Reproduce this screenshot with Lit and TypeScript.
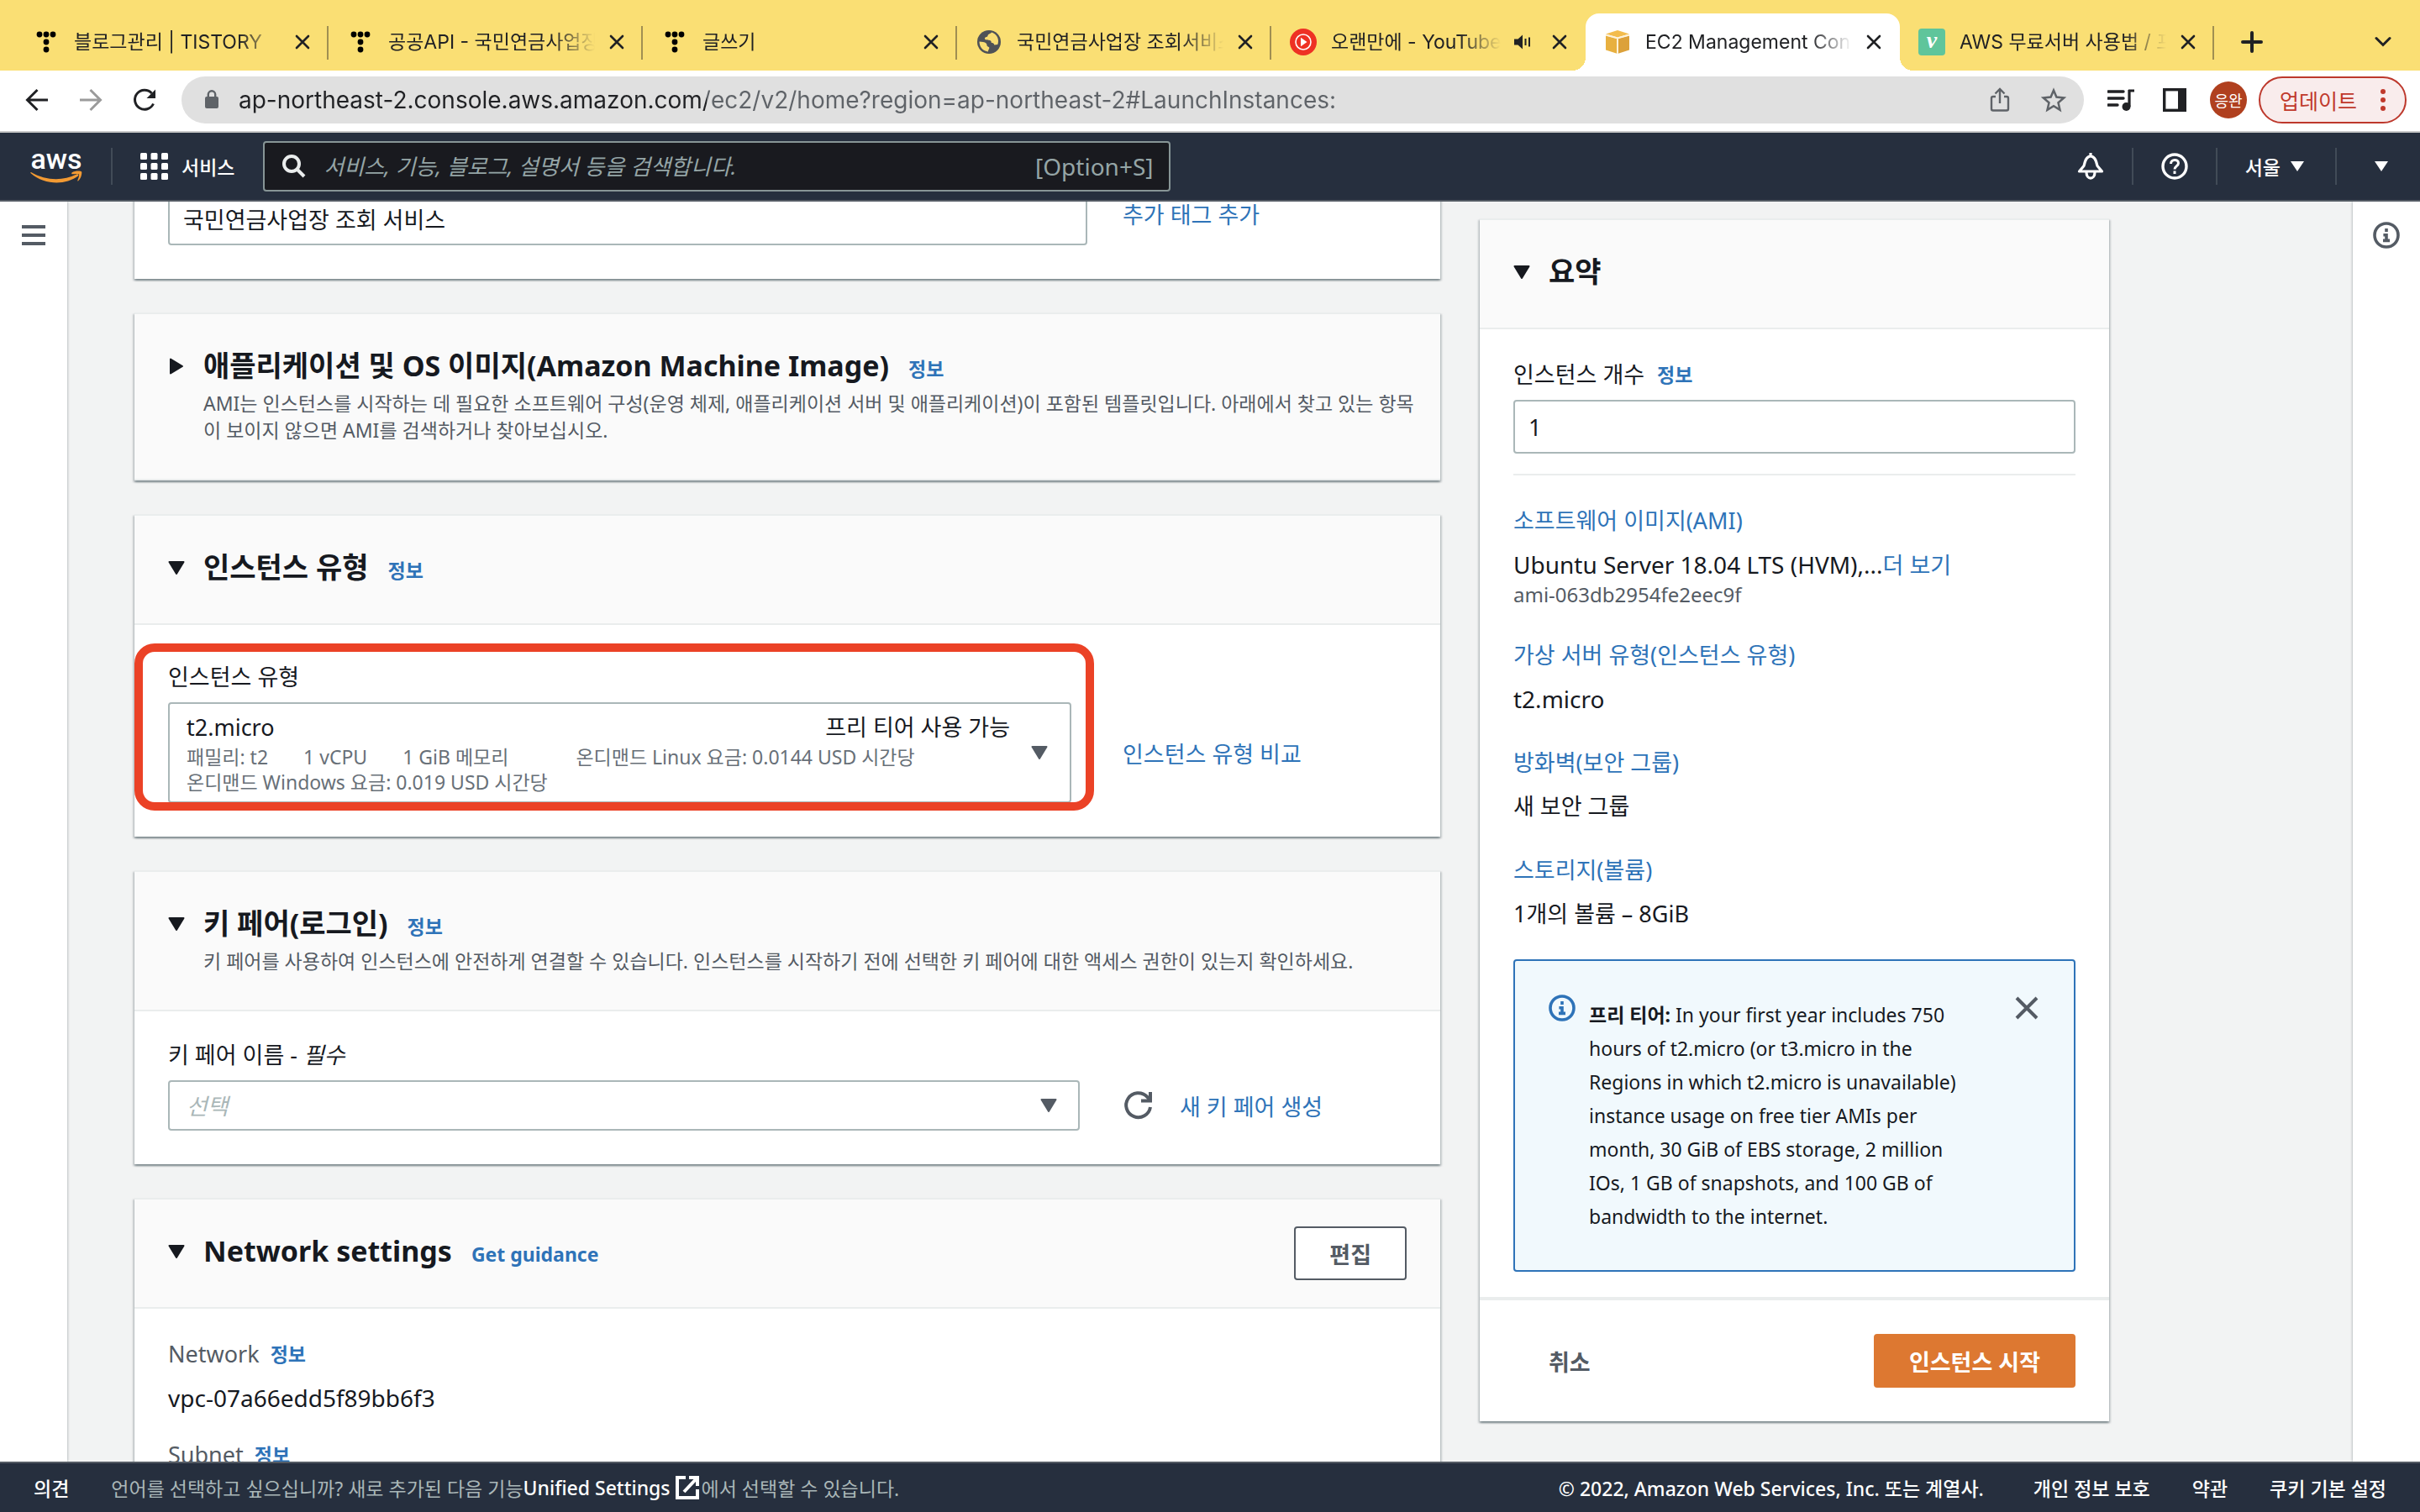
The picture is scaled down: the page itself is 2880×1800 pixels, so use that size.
import { LitElement, html, css, svg, nothing, TemplateResult } from "lit";
import { customElement, state } from "lit/decorators.js";
import { classMap } from "lit/directives/class-map.js";

interface Tab {
  title: string;
  icon: TemplateResult;
  active?: boolean;
  audible?: boolean;
  line?: boolean;
}

const tistoryIcon = html`<svg class="fav" viewBox="0 0 32 32" aria-hidden="true">
  ${[[8, 7], [16, 7], [24, 7], [16, 16], [16, 25]].map(
    ([x, y]) => svg`<circle cx=${x} cy=${y} r="3.4" fill="#000" />`
  )}
</svg>`;

const globeIcon = html`<svg class="fav" viewBox="0 0 32 32" aria-hidden="true">
  <circle cx="16" cy="16" r="14" fill="#4f5257" />
  <path d="M19 4.500c-1 2-4 1.500-4.500 4-.4 2.200-3 1-3.500 3-.4 1.800 2 2 4.500 2.200 2.500.2 3.500 1.300 3.300 3.300 1.700 0 3.200.5 3.500 2.500l4-.5c1.500-4 .7-8.500-2.300-11.500-1.300-1.400-3-2.500-5-3zM4.500 15.500c3 .3 6.500.5 8 2 1.500 1.400.5 2.500 1.500 3.500s2.500.6 2.300 2.300c-.2 1.400-1.300 1.700-1.300 4.200-6-.5-10.500-5.500-10.500-12z" fill="#f9dd74" />
</svg>`;

const musicIcon = html`<svg class="fav" viewBox="0 0 32 32" aria-hidden="true">
  <circle cx="16" cy="16" r="16" fill="#ee3124" />
  <circle cx="16" cy="16" r="9" fill="none" stroke="#fff" stroke-width="1.600" />
  <path d="M13 10.800v10.400l7.500-5.200z" fill="#fff" />
</svg>`;

const ec2Icon = html`<svg class="fav" viewBox="0 0 32 32" aria-hidden="true">
  <path d="M2 8.500 16 12v18L2 25.500z" fill="#e8b040" />
  <path d="M30 8.500 16 12v18l14-4.500z" fill="#dca13a" />
  <path d="M2 6.500 16 2l14 4.500L16 10.500z" fill="#f3bc4d" />
  <path d="M2 7.500 16 11.500 30 7.500M16 12v18" fill="none" stroke="#fdf1d8" stroke-width="2" />
</svg>`;

const velogIcon = html`<span class="fav velog" aria-hidden="true">v</span>`;

const tabs: Tab[] = [
  { title: "블로그관리 | TISTORY", icon: tistoryIcon, line: true },
  { title: "공공API - 국민연금사업장", icon: tistoryIcon, line: true },
  { title: "글쓰기", icon: tistoryIcon, line: true },
  { title: "국민연금사업장 조회서비스", icon: globeIcon, line: true },
  { title: "오랜만에 - YouTube", icon: musicIcon, audible: true },
  { title: "EC2 Management Con", icon: ec2Icon, active: true },
  { title: "AWS 무료서버 사용법 / 프리", icon: velogIcon, line: true },
];

const summaryRows = [
  { name: "소프트웨어 이미지(AMI)", value: "Ubuntu Server 18.04 LTS (HVM),...", more: "더 보기", note: "ami-063db2954fe2eec9f" },
  { name: "가상 서버 유형(인스턴스 유형)", value: "t2.micro" },
  { name: "방화벽(보안 그룹)", value: "새 보안 그룹", korean: true },
  { name: "스토리지(볼륨)", value: "1개의 볼륨 – 8GiB", korean: true },
];

const closeIcon = html`<svg width="20" height="20" viewBox="0 0 20 20" aria-hidden="true">
  <path d="M3 3l14 14M17 3 3 17" stroke="#202124" stroke-width="2.600" stroke-linecap="round" />
</svg>`;

const caretDown = html`<svg class="caret" viewBox="0 0 20 16" aria-hidden="true">
  <path d="M1.500 1h17L10 15z" fill="currentColor" stroke="currentColor" stroke-width="2" stroke-linejoin="round" />
</svg>`;

const caretRight = html`<svg class="caret" viewBox="0 0 20 20" aria-hidden="true">
  <path d="M3 1.500v17L17 10z" fill="currentColor" stroke="currentColor" stroke-width="2" stroke-linejoin="round" />
</svg>`;

const infoIcon = html`<svg width="32" height="32" viewBox="0 0 16 16" fill="none" stroke="currentColor" stroke-width="1.800" aria-hidden="true">
  <circle cx="8" cy="8" r="7" />
  <path d="M8 4v2M6.200 7.900H8v3.100M6 11.200h4" />
</svg>`;

@customElement("app-root")
export class AppRoot extends LitElement {
  @state() private alertOpen = true;

  static styles = css`
    :host {
      display: block;
      --aws: "Noto Sans", "Noto Sans CJK KR", sans-serif;
      --chrome: Inter, "Noto Sans CJK KR", sans-serif;
      --blue: #2e73b8;
      --ink: #16191f;
      --grey: #545b64;
      --rule: #eaeded;
      font-family: var(--aws);
      color: var(--ink);
    }
    *, *::before, *::after { box-sizing: border-box; }
    button, input, select { font: inherit; color: inherit; margin: 0; }
    button { background: none; border: 0; padding: 0; cursor: pointer; }
    a { color: var(--blue); text-decoration: none; }
    svg { display: block; flex: none; }
    h2, p, dl, dd { margin: 0; }

    .shell { display: flex; flex-direction: column; height: 100vh; overflow: hidden; background: #f2f3f3; }

    .tabstrip { display: flex; align-items: flex-end; height: 84px; flex: none; padding: 16px 34px 0 17px; background: #fadf74; font-family: var(--chrome); }
    .tab { position: relative; display: flex; align-items: center; flex: 0 1 374px; min-width: 0; height: 68px; padding: 0 21px 0 22px; font-size: 23px; color: #202124; }
    .tab.line::after { content: ""; position: absolute; right: 0; top: 15px; width: 2px; height: 40px; background: #a08f52; }
    .tab.active { background: #fff; border-radius: 16px 16px 0 0; }
    .tab.active::before, .tab.active::after { content: ""; position: absolute; bottom: 0; width: 16px; height: 16px; }
    .tab.active::before { left: -16px; background: radial-gradient(circle at 0 0, transparent 16px, #fff 16px); }
    .tab.active::after { right: -16px; background: radial-gradient(circle at 100% 0, transparent 16px, #fff 16px); }
    .fav { width: 32px; height: 32px; flex: none; margin-right: 17px; }
    .velog { display: flex; align-items: center; justify-content: center; border-radius: 4px; background: #5fc59b; color: #fff; font: italic bold 28px/28px "Liberation Serif", serif; padding-bottom: 4px; }
    .title { flex: 1; min-width: 0; overflow: hidden; white-space: nowrap; line-height: 34px; margin-right: 16px; -webkit-mask-image: linear-gradient(90deg, #000 calc(100% - 50px), transparent); mask-image: linear-gradient(90deg, #000 calc(100% - 50px), transparent); }
    .audio { margin-right: 24px; }
    .newtab { align-self: center; margin-left: 32px; }
    .tabmenu { align-self: center; margin-left: auto; }

    .toolbar { display: flex; align-items: center; flex: none; height: 74px; padding: 0 16px 2px 28px; background: #fff; border-bottom: 2px solid #c8c8c8; font-family: var(--chrome); }
    .navs { display: flex; gap: 32px; margin-right: 28px; }
    .omnibox { display: flex; align-items: center; flex: 1; height: 56px; padding: 0 20px 0 26px; border-radius: 28px; background: #e0e0e0; }
    .url { flex: 1; min-width: 0; height: 40px; margin: 0 24px 0 22px; border: 0; padding: 0; outline: 0; font-size: 28px; color: #5f6368; -webkit-text-fill-color: transparent; background: linear-gradient(90deg, #202124 557px, #5f6368 557px); -webkit-background-clip: text; background-clip: text; }
    .omniacts { display: flex; gap: 32px; }
    .tools { display: flex; align-items: center; gap: 32px; margin: 0 26px 0 28px; }
    .avatar { display: flex; align-items: center; justify-content: center; width: 44px; height: 44px; border-radius: 50%; background: #b0401f; color: #fff; font-size: 18px; margin-right: 14px; }
    .update { display: flex; align-items: center; justify-content: space-between; width: 176px; height: 56px; padding: 0 22px 0 23px; border: 2px solid #bd382c; border-radius: 28px; background: #f9ecec; color: #c0392b; font-size: 25px; }

    .awsnav { display: flex; align-items: center; flex: none; height: 82px; padding: 0 36px; background: #262f3e; border-bottom: 2px solid #545b64; color: #fff; font-size: 23px; font-weight: 500; }
    .logo { display: flex; flex-direction: column; align-items: center; width: 62px; color: #fff; font: 500 34px/24px Roboto, "Liberation Sans", sans-serif; }
    .logo span { display: block; height: 26px; }
    .bar { width: 2px; height: 44px; background: #414b57; }
    .logo + .bar { margin: 0 33px 0 34px; }
    .services { display: flex; align-items: center; gap: 16px; margin-right: 34px; }
    .search { display: flex; align-items: center; flex: 0 1 1080px; height: 60px; padding: 0 19px; border: 2px solid #879596; border-radius: 4px; background: #191a1f; }
    .search input { flex: 1; min-width: 0; height: 52px; margin-left: 19px; padding: 0; border: 0; outline: 0; background: none; font-size: 26px; font-weight: 400; }
    .search input::placeholder { color: #95a5a6; font-style: italic; opacity: 1; }
    .search kbd { font: 400 28px var(--aws); color: #95a5a6; }
    .acts { display: flex; align-items: center; margin-left: auto; }
    .acts button { display: flex; align-items: center; gap: 12px; margin: 0 33px; }
    .acts .region { margin-right: 37px; }
    .acts button:last-child { margin: 0 2px 0 45px; }
    .tri { width: 16px; height: 12px; }

    .page { display: flex; flex: 1; min-height: 0; overflow: hidden; }
    .rail { flex: none; width: 80px; background: #fff; box-shadow: 0 0 3px rgba(0, 28, 36, 0.4); color: var(--grey); display: flex; flex-direction: column; align-items: center; padding-top: 24px; }
    .content { flex: 1; min-width: 0; display: grid; grid-template-columns: minmax(0, 1554fr) minmax(0, 749fr); gap: 47px; align-items: start; padding: 0 290px 0 80px; }
    .column { display: flex; flex-direction: column; gap: 40px; margin-top: -40px; }
    .aside { margin-top: 20px; }

    .card { background: #fff; border-top: 2px solid var(--rule); box-shadow: 0 2px 2px rgba(0, 28, 36, 0.3), 2px 2px 2px rgba(0, 28, 36, 0.15), -2px 2px 2px rgba(0, 28, 36, 0.15); }
    .head { display: flex; justify-content: space-between; align-items: flex-start; min-height: 130px; padding: 40px; background: #fafafa; border-bottom: 2px solid var(--rule); }
    .heading { display: grid; grid-template-columns: 20px 1fr; column-gap: 22px; align-items: center; }
    .titleline { display: flex; align-items: baseline; gap: 23px; height: 44px; }
    h2 { font-size: 34px; font-weight: 700; line-height: 42px; }
    .caret { width: 20px; }
    .info { font-size: 23px; font-weight: 700; line-height: 32px; }
    .desc { grid-column: 2; margin-top: 6px; font-size: 23px; line-height: 32px; color: var(--grey); white-space: nowrap; padding-bottom: 2px; }
    .body { padding: 40px; font-size: 27px; }
    .body.tight { padding-top: 30px; }
    .row { display: grid; grid-template-columns: minmax(0, 1094fr) minmax(0, 338fr); column-gap: 42px; align-items: center; }
    .body.first { padding-top: 26px; align-items: start; line-height: 56px; }
    .label { display: flex; align-items: center; gap: 15px; line-height: 44px; margin-bottom: 8px; }
    .box { display: block; width: 100%; height: 64px; padding: 0 16px; border: 2px solid #aab7b8; border-radius: 4px; background: #fff; outline: 0; }
    .typefield { position: relative; margin-right: 19px; }
    .type { display: flex; align-items: center; justify-content: space-between; width: 100%; height: 120px; padding: 0 26px 0 20px; border: 2px solid #aab7b8; border-radius: 4px; text-align: left; color: var(--grey); }
    .typeinfo { width: 980px; }
    .typename { display: flex; justify-content: space-between; align-items: center; line-height: 40px; color: var(--ink); }
    .specs { display: flex; gap: 42px; font-size: 23px; line-height: 30px; color: #687078; white-space: nowrap; }
    .specs .wide { margin-left: 38px; }
    .mark { position: absolute; inset: -70px -27px -9px -40px; border: 10px solid #eb4226; border-radius: 24px; pointer-events: none; }
    .pick { position: relative; margin-right: 9px; color: var(--grey); }
    .pick select { width: 100%; height: 60px; padding: 0 20px; appearance: none; border: 2px solid #aab7b8; border-radius: 4px; background: #fff; color: #aab7b8; font-style: italic; outline: 0; }
    .pick .caret { position: absolute; right: 27px; top: 22px; pointer-events: none; }
    .create { display: flex; align-items: center; gap: 32px; color: var(--grey); }
    .btn { height: 64px; padding: 0 40px; border: 2px solid var(--grey); border-radius: 4px; background: #fff; color: var(--grey); font-size: 27px; font-weight: 700; }
    .head .btn { margin: -8px 0 -20px; }
    .facts { display: flex; flex-direction: column; padding: 32px 40px 40px; font-size: 28px; line-height: 44px; }
    .facts .name { display: flex; align-items: center; gap: 13px; font-size: 27px; color: var(--grey); }
    .facts dd { margin: 8px 0 24px; }

    .sumbody { padding: 32px 40px 30px; font-size: 27px; }
    .sumlist { display: flex; flex-direction: column; gap: 36px; margin: 24px 0 34px; padding-top: 34px; border-top: 2px solid var(--rule); line-height: 40px; }
    .sumlist dd { margin-top: 12px; font-size: 28px; white-space: nowrap; }
    .sumlist dd.korean, .sumlist .more { font-size: 27px; }
    .sumlist .value { display: block; height: 40px; }
    .note { display: block; font-size: 24px; line-height: 32px; color: var(--grey); }
    .alert { display: flex; gap: 16px; padding: 40px 40px 44px; border: 2px solid var(--blue); border-radius: 4px; background: #f1f9fd; color: var(--blue); }
    .alert p { flex: 1; margin: 4px 0 0; font-size: 23px; line-height: 40px; color: var(--ink); }
    .alert b { font-weight: 700; }
    .alert button { align-self: flex-start; margin-left: 24px; }
    .sumfoot { display: flex; align-items: center; justify-content: space-between; padding: 40px; border-top: 4px solid var(--rule); }
    .btn.plain { border-color: transparent; background: none; }
    .btn.primary { border-color: #dd7831; background: #dd7831; color: #fff; }

    .footer { display: flex; align-items: center; flex: none; height: 60px; padding: 0 40px; background: #262f3e; border-top: 2px solid #545b64; color: #fff; font-size: 23px; font-weight: 500; white-space: nowrap; }
    .footer a { color: #fff; }
    .footer .lang { display: flex; align-items: center; margin-left: 50px; color: #aab7b8; font-weight: 400; }
    .footer .lang a { display: flex; align-items: center; gap: 6px; margin-right: 3px; font-weight: 500; }
    .legal { display: flex; gap: 50px; margin-left: auto; }
    .legal span { margin-right: 9px; }
  `;

  private heading(title: string, info: string, open: boolean, desc?: TemplateResult) {
    return html`<div class="heading">
      ${open ? caretDown : caretRight}
      <div class="titleline">
        <h2>${title}</h2>
        ${info ? html`<a class="info" href="#">${info}</a>` : nothing}
      </div>
      ${desc ? html`<p class="desc">${desc}</p>` : nothing}
    </div>`;
  }

  private renderTabs() {
    return html`<div class="tabstrip">
      ${tabs.map(
        (t) => html`<div class=${classMap({ tab: true, active: !!t.active, line: !!t.line })}>
          ${t.icon}<span class="title">${t.title}</span>
          ${t.audible
            ? html`<svg class="audio" width="20" height="20" viewBox="0 0 20 20" aria-label="소리">
                <path d="M0 6.500h4.500L10 1.500v17L4.500 13.500H0z" fill="#202124" />
                <path d="M13.500 6v8M18 4.500v11" stroke="#202124" stroke-width="2" />
              </svg>`
            : nothing}
          <button aria-label="탭 닫기">${closeIcon}</button>
        </div>`
      )}
      <button class="newtab" aria-label="새 탭">
        <svg width="26" height="26" viewBox="0 0 26 26"><path d="M13 2v22M2 13h22" stroke="#202124" stroke-width="4" stroke-linecap="round" /></svg>
      </button>
      <button class="tabmenu" aria-label="탭 검색">
        <svg width="20" height="20" viewBox="0 0 20 20"><path d="M2 5.500l8 8 8-8" fill="none" stroke="#202124" stroke-width="3" stroke-linecap="round" /></svg>
      </button>
    </div>`;
  }

  private renderToolbar() {
    return html`<div class="toolbar">
      <div class="navs">
        <button aria-label="뒤로"><svg width="32" height="32" viewBox="0 0 32 32" fill="none" stroke="#202124" stroke-width="3"><path d="M29 16H5M16.500 4 4.500 16l12 12" /></svg></button>
        <button aria-label="앞으로"><svg width="32" height="32" viewBox="0 0 32 32" fill="none" stroke="#9b9b9b" stroke-width="3"><path d="M3 16h24M15.500 4l12 12-12 12" /></svg></button>
        <button aria-label="새로고침"><svg width="32" height="32" viewBox="0 0 32 32"><path d="M26.500 20.500a11.500 11.500 0 1 1-2-12.500" fill="none" stroke="#202124" stroke-width="3" /><path d="M29 3.500V14H18.500z" fill="#202124" /></svg></button>
      </div>
      <div class="omnibox">
        <svg width="20" height="26" viewBox="0 0 20 26" aria-hidden="true"><rect x="2" y="9" width="16" height="14" rx="2" fill="#5f6368" /><path d="M5.800 10V6.500a4.200 4.200 0 0 1 8.400 0V10" fill="none" stroke="#5f6368" stroke-width="2.400" /></svg>
        <input class="url" type="text" aria-label="주소" .value=${"ap-northeast-2.console.aws.amazon.com/ec2/v2/home?region=ap-northeast-2#LaunchInstances:"} />
        <div class="omniacts">
          <button aria-label="공유"><svg width="32" height="32" viewBox="0 0 32 32" fill="none" stroke="#5f6368" stroke-width="2.400"><path d="M11 12H8a2 2 0 0 0-2 2v12.500a2 2 0 0 0 2 2h16a2 2 0 0 0 2-2V14a2 2 0 0 0-2-2h-3M16 20V4M10.500 8.500 16 3l5.500 5.500" /></svg></button>
          <button aria-label="북마크"><svg width="32" height="32" viewBox="0 0 32 32" fill="none" stroke="#5f6368" stroke-width="2.500"><path d="M16 4.500l3.400 8.100 8.800.8-6.700 5.800 2 8.600L16 23.200l-7.500 4.600 2-8.600-6.700-5.800 8.800-.8z" /></svg></button>
        </div>
      </div>
      <div class="tools">
        <button aria-label="미디어"><svg width="32" height="32" viewBox="0 0 32 32"><path d="M1 6h18M1 14h18M1 22h11" stroke="#202124" stroke-width="3.400" stroke-linecap="round" /><path d="M25 5h7M26 4v20" stroke="#202124" stroke-width="3.200" /><circle cx="22.500" cy="24" r="5" fill="#202124" /></svg></button>
        <button aria-label="사이드 패널"><svg width="32" height="32" viewBox="0 0 32 32"><rect x="3.700" y="3.700" width="24.600" height="24.600" fill="#fff" stroke="#202124" stroke-width="3.400" /><path d="M20 3h9v26h-9z" fill="#202124" /></svg></button>
      </div>
      <button class="avatar" aria-label="프로필">응완</button>
      <button class="update">업데이트
        <svg width="8" height="28" viewBox="0 0 8 28" fill="#c0392b" aria-hidden="true"><circle cx="4" cy="4" r="3" /><circle cx="4" cy="14" r="3" /><circle cx="4" cy="24" r="3" /></svg>
      </button>
    </div>`;
  }

  private renderNav() {
    const tri = html`<svg class="tri" viewBox="0 0 16 12" aria-hidden="true"><path d="M0 0h16L8 12z" fill="#fff" /></svg>`;
    return html`<nav class="awsnav">
      <a class="logo" href="#"><span>aws</span>
        <svg width="62" height="16" viewBox="0 0 62 16" aria-hidden="true">
          <path d="M1 2c18 10.500 38 10.500 54 2.500 2-.9 3.300 1 1.600 2.300C42 17.500 17 17.500 .6 3.200 0 2.500 .3 1.700 1 2z" fill="#f29a33" />
          <path d="M49.500 2.400C53 0 60 .2 61 1.300c1 1.200-.4 8.300-3.800 11-.6.500-1.100.2-.9-.4.800-1.900 2.400-6.300 1.600-7.400-.8-1-5.300-.5-7.600-.2-1 .1-1.500-.9-.8-1.900z" fill="#f29a33" />
        </svg>
      </a>
      <span class="bar"></span>
      <button class="services">
        <svg width="33" height="32" viewBox="0 0 33 32" fill="#fff" aria-hidden="true">
          ${[0, 12.5, 25].map((x) => [0, 12, 24].map((y) => svg`<rect x=${x} y=${y} width="8" height="8" rx="1.500" />`))}
        </svg>서비스
      </button>
      <div class="search">
        <svg width="32" height="32" viewBox="0 0 32 32" fill="none" stroke="#eaeded" stroke-width="4" aria-hidden="true"><circle cx="13" cy="13" r="9" /><path d="M19.500 19.500 28 28" /></svg>
        <input type="search" aria-label="검색" placeholder="서비스, 기능, 블로그, 설명서 등을 검색합니다." />
        <kbd>[Option+S]</kbd>
      </div>
      <div class="acts">
        <button aria-label="알림"><svg width="32" height="32" viewBox="0 0 32 32" fill="none" stroke="#fff" stroke-width="3.200" stroke-linejoin="round"><path d="M2.500 22h27L24 15.500C23 11 21.500 4 16 4S9 11 8 15.500zM11 23c0 9.500 10 9.500 10 0M16 0v4" /></svg></button>
        <span class="bar"></span>
        <button aria-label="도움말"><svg width="32" height="32" viewBox="0 0 32 32" fill="none" stroke="#fff" stroke-width="3.400"><circle cx="16" cy="16" r="14" /><path d="M11.500 13c0-6 9-6 9-.8 0 3.300-4.500 3.500-4.500 7.300M16 21.500V25" stroke-width="3" /></svg></button>
        <span class="bar"></span>
        <button class="region">서울 ${tri}</button>
        <span class="bar"></span>
        <button aria-label="계정">${tri}</button>
      </div>
    </nav>`;
  }

  private renderMain() {
    return html`<div class="column">
      <section class="card">
        <div class="body first row">
          <input class="box" type="text" aria-label="이름" .value=${"국민연금사업장 조회 서비스"} />
          <a href="#">추가 태그 추가</a>
        </div>
      </section>

      <section class="card">
        <div class="head">
          ${this.heading("애플리케이션 및 OS 이미지(Amazon Machine Image)", "정보", false,
            html`AMI는 인스턴스를 시작하는 데 필요한 소프트웨어 구성(운영 체제, 애플리케이션 서버 및 애플리케이션)이 포함된 템플릿입니다. 아래에서 찾고 있는 항목<br />이 보이지 않으면 AMI를 검색하거나 찾아보십시오.`)}
        </div>
      </section>

      <section class="card">
        <div class="head">${this.heading("인스턴스 유형", "정보", true)}</div>
        <div class="body">
          <label class="label" for="type">인스턴스 유형</label>
          <div class="row">
            <div class="typefield">
              <button class="type" id="type">
                <span class="typeinfo">
                  <span class="typename"><span>t2.micro</span><span>프리 티어 사용 가능</span></span>
                  <span class="specs"><span>패밀리: t2</span><span>1 vCPU</span><span>1 GiB 메모리</span><span class="wide">온디맨드 Linux 요금: 0.0144 USD 시간당</span></span>
                  <span class="specs">온디맨드 Windows 요금: 0.019 USD 시간당</span>
                </span>
                ${caretDown}
              </button>
              <div class="mark"></div>
            </div>
            <a href="#">인스턴스 유형 비교</a>
          </div>
        </div>
      </section>

      <section class="card">
        <div class="head">
          ${this.heading("키 페어(로그인)", "정보", true,
            html`키 페어를 사용하여 인스턴스에 안전하게 연결할 수 있습니다. 인스턴스를 시작하기 전에 선택한 키 페어에 대한 액세스 권한이 있는지 확인하세요.`)}
        </div>
        <div class="body tight">
          <label class="label" for="keypair"><span>키 페어 이름 - <i>필수</i></span></label>
          <div class="row">
            <div class="pick">
              <select id="keypair"><option>선택</option></select>
              ${caretDown}
            </div>
            <div class="create">
              <button aria-label="새로고침"><svg width="36" height="36" viewBox="0 0 36 36" fill="none" stroke="currentColor" stroke-width="4"><path d="M33 20a14.500 14.500 0 1 1-4-12.500l3 3.500" /><path d="M33 2v10.500H22" /></svg></button>
              <a href="#">새 키 페어 생성</a>
            </div>
          </div>
        </div>
      </section>

      <section class="card">
        <div class="head">
          ${this.heading("Network settings", "Get guidance", true)}
          <button class="btn">편집</button>
        </div>
        <dl class="facts">
          <dt class="name">Network <a class="info" href="#">정보</a></dt>
          <dd>vpc-07a66edd5f89bb6f3</dd>
          <dt class="name">Subnet <a class="info" href="#">정보</a></dt>
        </dl>
      </section>
    </div>`;
  }

  private renderSummary() {
    return html`<aside class="card aside">
      <div class="head">${this.heading("요약", "", true)}</div>
      <div class="sumbody">
        <div class="label"><label for="count">인스턴스 개수</label><a class="info" href="#">정보</a></div>
        <input class="box" id="count" type="text" inputmode="numeric" .value=${"1"} />
        <dl class="sumlist">
          ${summaryRows.map(
            (r) => html`<div>
              <dt><a href="#">${r.name}</a></dt>
              <dd class=${classMap({ korean: !!r.korean })}><span class="value">${r.value}${r.more ? html`<a class="more" href="#">${r.more}</a>` : nothing}</span>${r.note ? html`<span class="note">${r.note}</span>` : nothing}</dd>
            </div>`
          )}
        </dl>
        ${this.alertOpen
          ? html`<div class="alert" role="status">
              ${infoIcon}
              <p><b>프리 티어:</b> In your first year includes 750 hours of t2.micro (or t3.micro in the Regions in which t2.micro is unavailable) instance usage on free tier AMIs per month, 30 GiB of EBS storage, 2 million IOs, 1 GB of snapshots, and 100 GB of bandwidth to the internet.</p>
              <button aria-label="닫기" @click=${() => (this.alertOpen = false)}>
                <svg width="32" height="32" viewBox="0 0 32 32" stroke="#545b64" stroke-width="4"><path d="M4 4l24 24M28 4 4 28" /></svg>
              </button>
            </div>`
          : nothing}
      </div>
      <div class="sumfoot">
        <button class="btn plain">취소</button>
        <button class="btn primary">인스턴스 시작</button>
      </div>
    </aside>`;
  }

  render() {
    return html`<div class="shell">
      ${this.renderTabs()} ${this.renderToolbar()} ${this.renderNav()}
      <div class="page">
        <div class="rail">
          <button aria-label="메뉴"><svg width="28" height="32" viewBox="0 0 28 32" fill="currentColor"><path d="M0 4h28v4H0zM0 14h28v4H0zM0 24h28v4H0z" /></svg></button>
        </div>
        <main class="content">${this.renderMain()} ${this.renderSummary()}</main>
        <div class="rail"><button aria-label="정보">${infoIcon}</button></div>
      </div>
      <footer class="footer">
        <a href="#">의견</a>
        <span class="lang">언어를 선택하고 싶으십니까? 새로 추가된 다음 기능<a href="#">Unified Settings
          <svg width="28" height="28" viewBox="0 0 28 28" fill="none" stroke="#fff" stroke-width="4" aria-hidden="true"><path d="M12 2H2v24h24V16M16 2h10v10M26 2 10 19" /></svg></a>에서 선택할 수 있습니다.</span>
        <div class="legal">
          <span>© 2022, Amazon Web Services, Inc. 또는 계열사.</span>
          <a href="#">개인 정보 보호</a><a href="#">약관</a><a href="#">쿠키 기본 설정</a>
        </div>
      </footer>
    </div>`;
  }
}
